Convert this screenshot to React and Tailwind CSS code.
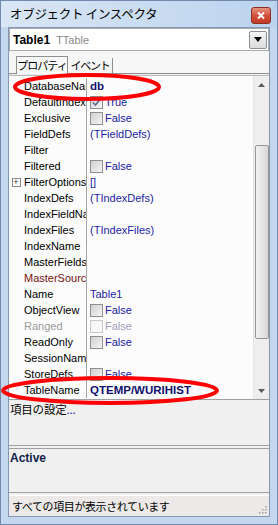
import React from 'react'

const jp = { fontFamily: '"Noto Sans CJK JP", "Noto Sans", sans-serif' }
const ui = { fontFamily: '"Liberation Sans", Arial, sans-serif' }

const rows = [
  { name: 'DatabaseName', value: 'db', kind: 'bold' },
  { name: 'DefaultIndex', value: 'True', kind: 'check', checked: true },
  { name: 'Exclusive', value: 'False', kind: 'check' },
  { name: 'FieldDefs', value: '(TFieldDefs)' },
  { name: 'Filter', value: '' },
  { name: 'Filtered', value: 'False', kind: 'check' },
  { name: 'FilterOptions', value: '[]', plus: true },
  { name: 'IndexDefs', value: '(TIndexDefs)' },
  { name: 'IndexFieldNames', value: '' },
  { name: 'IndexFiles', value: '(TIndexFiles)' },
  { name: 'IndexName', value: '' },
  { name: 'MasterFields', value: '' },
  { name: 'MasterSource', value: '', color: 'text-[#7a1010]' },
  { name: 'Name', value: 'Table1' },
  { name: 'ObjectView', value: 'False', kind: 'check' },
  { name: 'Ranged', value: 'False', kind: 'check', disabled: true },
  { name: 'ReadOnly', value: 'False', kind: 'check' },
  { name: 'SessionName', value: '' },
  { name: 'StoreDefs', value: 'False', kind: 'check' },
  { name: 'TableName', value: 'QTEMP/WURIHIST', kind: 'bold' },
]

function CheckBox({ checked, disabled }) {
  return (
    <span
      className={`w-[13px] h-[13px] mr-[2px] shrink-0 border flex items-center justify-center bg-gradient-to-br ${
        disabled ? 'border-[#c8c8c8] from-[#f4f4f4] to-[#fbfbfb]' : 'border-[#8e8f8f] from-[#d0d0d0] to-[#f6f6f6]'
      }`}
    >
      {checked && (
        <svg width="9" height="9" viewBox="0 0 9 9">
          <path d="M1 4.5 L3.5 7 L8 1.5" fill="none" stroke="#5a6b90" strokeWidth="1.6" />
        </svg>
      )}
    </span>
  )
}

function Row({ r }) {
  const nameColor = r.disabled ? 'text-[#9a9a9a]' : r.color || 'text-black'
  const valColor = r.disabled ? 'text-[#a0a0c0]' : 'text-[#1c1ca8]'
  return (
    <div className="flex h-[16px] items-center text-[11px] leading-[16px]" style={ui}>
      <div className="w-[14px] h-full flex items-center justify-center">
        {r.plus && (
          <span className="w-[9px] h-[9px] border border-[#8a8a8a] bg-white flex items-center justify-center text-[9px] leading-none text-[#333]">
            +
          </span>
        )}
      </div>
      <div className={`w-[63px] h-full overflow-hidden whitespace-nowrap pl-[1px] ${nameColor}`}>{r.name}</div>
      <div className="w-px h-full bg-[#a5a5a5]" />
      <div className={`flex-1 h-full flex items-center pl-[3px] whitespace-nowrap overflow-hidden ${valColor}`}>
        {r.kind === 'check' && <CheckBox checked={r.checked} disabled={r.disabled} />}
        <span className={r.kind === 'bold' ? 'font-bold text-[11.5px] text-[#10106e]' : ''}>{r.value}</span>
      </div>
    </div>
  )
}

function ScrollBar() {
  return (
    <div className="w-[16px] h-full bg-[#eeeeee] border-l border-[#e4e4e4] flex flex-col items-center">
      <div className="h-[17px] w-full flex items-center justify-center">
        <svg width="7" height="4" viewBox="0 0 7 4">
          <path d="M0 4 L3.5 0 L7 4 Z" fill="#5a5a5a" />
        </svg>
      </div>
      <div className="mt-[52px] w-[14px] h-[194px] rounded-[2px] border border-[#979797] bg-gradient-to-r from-[#f2f2f2] via-[#e6e6e6] to-[#d6d6d6]" />
      <div className="flex-1" />
      <div className="h-[17px] w-full flex items-center justify-center">
        <svg width="7" height="4" viewBox="0 0 7 4">
          <path d="M0 0 L3.5 4 L7 0 Z" fill="#5a5a5a" />
        </svg>
      </div>
    </div>
  )
}

export default function App() {
  return (
    <div className="relative w-[278px] h-[525px] bg-[#c4d7ee] border border-[#7189ab] flex flex-col overflow-hidden">
      {/* title bar */}
      <div className="h-[26px] flex items-center justify-between pl-[9px] pr-[6px] bg-gradient-to-r from-[#d9e6f5] to-[#bcd3ee]">
        <span className="text-[12.5px] text-black tracking-[-0.3px]" style={jp}>
          オブジェクト インスペクタ
        </span>
        <div className="w-[20px] h-[17px] mt-[2px] rounded-[3px] border border-[#8c2d22] bg-gradient-to-b from-[#e8917f] via-[#d2513b] to-[#c13b27] flex items-center justify-center">
          <svg width="8" height="7" viewBox="0 0 8 7">
            <path d="M1 0.5 L7 6.5 M7 0.5 L1 6.5" stroke="white" strokeWidth="2" />
          </svg>
        </div>
      </div>

      {/* client area */}
      <div className="mx-[7px] mb-[7px] flex-1 flex flex-col bg-[#f0f0f0] border border-[#8498b4]">
        {/* combo */}
        <div className="h-[23px] bg-white border border-[#a9abaf] flex items-center justify-between pl-[3px] pr-[1px]">
          <div className="flex items-baseline gap-[6px]" style={ui}>
            <span className="text-[12px] font-bold text-black">Table1</span>
            <span className="text-[11px] text-[#8a8a8a]">TTable</span>
          </div>
          <div className="w-[18px] h-[18px] rounded-[2px] border border-[#8e8f8f] bg-gradient-to-b from-[#f5f5f5] to-[#dcdcdc] flex items-center justify-center">
            <svg width="8" height="5" viewBox="0 0 8 5">
              <path d="M0 0 L4 5 L8 0 Z" fill="#000" />
            </svg>
          </div>
        </div>

        {/* tabs */}
        <div className="h-[23px] flex items-end pl-[7px] border-b border-[#8e8f8f] bg-[#f6f6f6]">
          <div className="h-[18px] w-[52px] border-l border-t border-r border-[#8e8f8f] bg-[#f8f8f8] -mb-px flex items-center justify-center">
            <span className="text-[11px] tracking-[-1px] text-black" style={jp}>
              プロパティ
            </span>
          </div>
          <div className="h-[15px] w-[45px] border-r border-[#8e8f8f] flex items-center justify-center">
            <span className="text-[11px] tracking-[-1.2px] text-black" style={jp}>
              イベント
            </span>
          </div>
        </div>

        {/* grid */}
        <div className="h-[324px] flex bg-[#fcfcfc] border-t border-[#b9b9b9] mt-px">
          <div className="flex-1 pt-[2px]">
            {rows.map((r) => (
              <Row key={r.name} r={r} />
            ))}
          </div>
          <ScrollBar />
        </div>

        {/* description */}
        <div className="h-[47px] border-t border-[#a0a0a0] border-b border-b-[#a0a0a0] px-[1px] leading-[16px]">
          <span className="text-[11.5px] text-black tracking-[-0.2px]" style={jp}>
            項目の設定<span className="text-[#1c1ca8]">...</span>
          </span>
        </div>
        <div className="h-[45px] mt-[2px] border-t border-[#a0a0a0] border-b border-b-[#a0a0a0] px-[1px] leading-[14px]">
          <span className="text-[12px] font-bold text-[#0f1f4a]" style={ui}>
            Active
          </span>
        </div>

        {/* status bar */}
        <div className="flex-1 mt-[2px] bg-[#ece9e8] border-t border-white flex items-center justify-between pl-[3px] pr-[2px]">
          <span className="text-[11px] tracking-[-0.4px] text-black" style={jp}>
            すべての項目が表示されています
          </span>
          <svg width="8" height="8" viewBox="0 0 8 8" className="self-end mb-[2px]">
            <rect x="6" y="0" width="1.5" height="1.5" fill="#a0a0a0" />
            <rect x="3" y="3" width="1.5" height="1.5" fill="#a0a0a0" />
            <rect x="6" y="3" width="1.5" height="1.5" fill="#a0a0a0" />
            <rect x="0" y="6" width="1.5" height="1.5" fill="#a0a0a0" />
            <rect x="3" y="6" width="1.5" height="1.5" fill="#a0a0a0" />
            <rect x="6" y="6" width="1.5" height="1.5" fill="#a0a0a0" />
          </svg>
        </div>
      </div>

      {/* red annotation ellipses */}
      <svg className="absolute left-0 top-0 pointer-events-none" width="278" height="525" viewBox="0 0 278 525">
        <ellipse cx="86" cy="86" rx="72" ry="12" fill="none" stroke="#ff0000" strokeWidth="4" />
        <ellipse cx="109" cy="389.5" rx="107" ry="12.5" fill="none" stroke="#ff0000" strokeWidth="4" />
      </svg>
    </div>
  )
}
